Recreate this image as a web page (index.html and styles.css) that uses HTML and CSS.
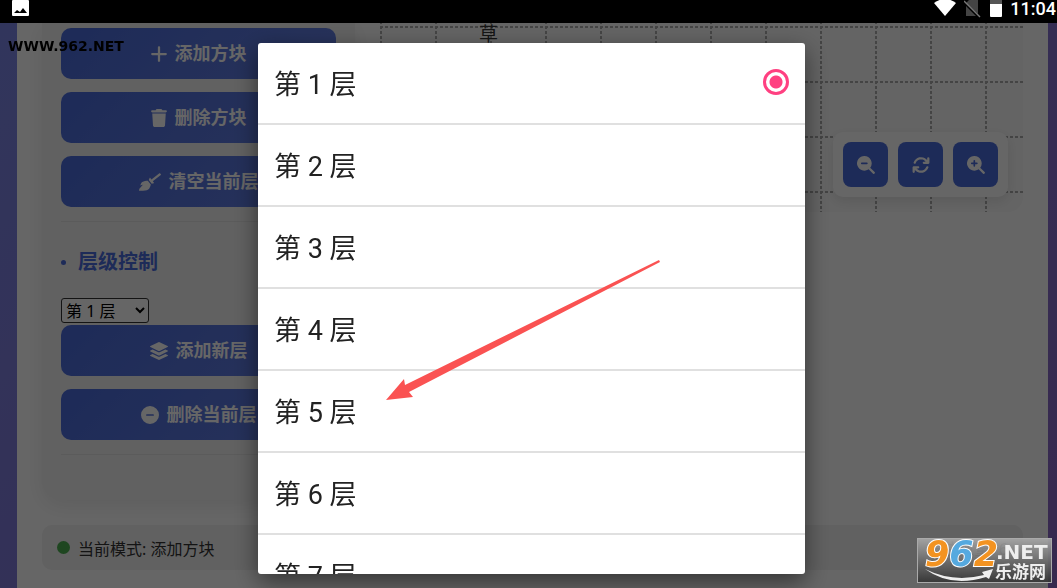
FILE: index.html
```
<!DOCTYPE html>
<html lang="zh-CN">

<head>
    <meta charset="UTF-8">
    <meta name="viewport" content="width=device-width, initial-scale=1.0">
    <title>层级控制</title>
    <link rel="stylesheet" href="styles.css">
</head>

<body>
    <header class="system-bar">
        <svg class="system-icon" viewBox="0 0 18 18">
            <path fill="#fff" fill-rule="evenodd" d="M1 0h15a1 1 0 0 1 1 1v14a1 1 0 0 1-1 1H1a1 1 0 0 1-1-1V1a1 1 0 0 1 1-1zM2 13h13l-4-5-3 4-3-2z" />
        </svg>
        <div class="system-right">
            <svg width="22" height="16" viewBox="0 0 22 16"><path fill="#fff" d="M0 3Q11-5 22 3L11 16z" /></svg>
            <svg width="18" height="18" viewBox="0 0 18 18">
                <path fill="#444" d="M5 0h9v14L2 3zM2 6l10 10H2z" />
                <path stroke="#777" stroke-width="1.4" d="M0 1l16 16" />
            </svg>
            <svg width="12" height="17" viewBox="0 0 12 17"><path fill="#555" d="M0 0h12v5H0z" /><path fill="#fff" d="M0 4h12v12a1 1 0 0 1-1 1H1a1 1 0 0 1-1-1z" /></svg>
            <time class="clock">11:04</time>
        </div>
    </header>

    <main class="page">
        <div class="container">
            <div class="workspace">
                <section class="panel">
                    <div class="group">
                        <button class="btn">
                            <svg class="icon icon-narrow" viewBox="0 0 448 512"><path d="M256 64c0-18-14-32-32-32s-32 14-32 32v160H32c-18 0-32 14-32 32s14 32 32 32h160v160c0 18 14 32 32 32s32-14 32-32V288h160c18 0 32-14 32-32s-14-32-32-32H256z" /></svg>
                            添加方块
                        </button>
                        <button class="btn">
                            <svg class="icon icon-narrow" viewBox="0 0 448 512"><path d="M135 18c6-11 17-18 29-18h120c12 0 23 7 29 18l7 14h96c18 0 32 14 32 32s-14 32-32 32H32C14 96 0 82 0 64s14-32 32-32h96zM32 128h384l-21 339c-2 25-23 45-48 45H101c-25 0-46-20-48-45z" /></svg>
                            删除方块
                        </button>
                        <button class="btn">
                            <svg class="icon icon-wide" viewBox="0 0 640 512"><path d="M256.470 216.770l86.730 109.180s-16.600 102.360-76.570 150.120C206.660 523.850 0 510.190 0 510.190s3.800-23.140 11-55.430l94.620-112.170c3.970-4.700-.870-11.620-6.650-9.500l-60.400 22.090c14.440-41.660 32.720-80.040 54.600-97.470 59.970-47.760 163.300-40.940 163.300-40.940zM636.530 31.030l-19.860-25c-5.490-6.900-15.520-8.050-22.410-2.560l-232.480 177.800-34.140-42.970c-5.090-6.410-15.140-5.210-18.590 2.210l-25.330 54.550 86.730 109.180 58.800-12.450c8-1.690 11.420-11.200 6.340-17.600l-34.090-42.920 232.480-177.800c6.890-5.480 8.040-15.530 2.550-22.440z" /></svg>
                            清空当前层
                        </button>
                    </div>
                    <div class="group">
                        <h2 class="group-title"><span class="bullet"></span><label for="layer">层级控制</label></h2>
                        <select id="layer" class="layer-select">
                            <option>第 1 层</option>
                            <option>第 2 层</option>
                            <option>第 3 层</option>
                            <option>第 4 层</option>
                            <option>第 5 层</option>
                            <option>第 6 层</option>
                            <option>第 7 层</option>
                        </select>
                        <button class="btn">
                            <svg class="icon" viewBox="0 0 512 512"><path d="M12 116l228-112q16-6 32 0l228 112q24 14 0 28L272 256q-16 6-32 0L12 144q-24-14 0-28zM12 242l62-30 150 72q32 14 64 0l150-72 62 30q24 14 0 28L272 382q-16 6-32 0L12 270q-24-14 0-28zM12 368l62-30 150 72q32 14 64 0l150-72 62 30q24 14 0 28L272 508q-16 6-32 0L12 396q-24-14 0-28z" /></svg>
                            添加新层
                        </button>
                        <button class="btn">
                            <svg class="icon" viewBox="0 0 512 512"><path fill-rule="evenodd" d="M256 0a256 256 0 1 0 0 512 256 256 0 1 0 0-512zM168 232h176a24 24 0 0 1 0 48H168a24 24 0 0 1 0-48z" /></svg>
                            删除当前层
                        </button>
                    </div>
                </section>

                <section class="canvas">
                    <svg class="grid">
                        <defs>
                            <pattern id="cell" width="55" height="55" y="3" patternUnits="userSpaceOnUse">
                                <path d="M0 1H55M1 0V55" fill="none" stroke="#aaa" stroke-width="2" stroke-dasharray="3 2" />
                            </pattern>
                        </defs>
                        <rect width="100%" height="100%" fill="url(#cell)" />
                    </svg>
                    <span class="block">草</span>
                    <div class="zoom-tools">
                        <button class="tool" aria-label="缩小">
                            <svg class="icon" viewBox="0 0 512 512"><path fill-rule="evenodd" d="M208 0a208 208 0 1 0 123 376l126 126a32 32 0 0 0 45-45L376 331A208 208 0 0 0 208 0zM136 184h144a24 24 0 0 1 0 48H136a24 24 0 0 1 0-48z" /></svg>
                        </button>
                        <button class="tool" aria-label="重置">
                            <svg class="icon" viewBox="0 0 512 512"><path d="M105 203a160 160 0 0 1 264-60l17 17h-50a32 32 0 0 0 0 64h128a32 32 0 0 0 32-32V64a32 32 0 0 0-64 0v51l-17-17A224 224 0 0 0 45 182a32 32 0 0 0 60 21zM39 289a32 32 0 0 0-23 31v128a32 32 0 0 0 64 0v-51l17 17a224 224 0 0 0 370-84 32 32 0 0 0-60-21 160 160 0 0 1-264 60l-17-17h50a32 32 0 0 0 0-64H48z" /></svg>
                        </button>
                        <button class="tool" aria-label="放大">
                            <svg class="icon" viewBox="0 0 512 512"><path fill-rule="evenodd" d="M208 0a208 208 0 1 0 123 376l126 126a32 32 0 0 0 45-45L376 331A208 208 0 0 0 208 0zM184 184v-48a24 24 0 0 1 48 0v48h48a24 24 0 0 1 0 48h-48v48a24 24 0 0 1-48 0v-48h-48a24 24 0 0 1 0-48z" /></svg>
                        </button>
                    </div>
                </section>
            </div>

            <footer class="status">
                <span class="status-mode"><i class="dot"></i>当前模式: 添加方块</span>
                <span>方块数量: 6</span>
            </footer>
        </div>
    </main>

    <div class="overlay">
        <div class="dialog" role="dialog">
            <label class="option">第 1 层<input type="radio" name="level" checked></label>
            <label class="option">第 2 层<input type="radio" name="level"></label>
            <label class="option">第 3 层<input type="radio" name="level"></label>
            <label class="option">第 4 层<input type="radio" name="level"></label>
            <label class="option">第 5 层<input type="radio" name="level"></label>
            <label class="option">第 6 层<input type="radio" name="level"></label>
            <label class="option">第 7 层<input type="radio" name="level"></label>
        </div>
    </div>

    <svg class="arrow" viewBox="0 0 276 142">
        <path fill="#fa5252" d="M274 0L20 125l-1-6L1 140l27-3-4-5L275 2z" />
    </svg>

    <div class="site-mark">WWW.962.NET</div>

    <svg class="site-logo" viewBox="0 0 135 45">
        <defs>
            <linearGradient id="plate" x2="0" y2="1">
                <stop offset="0" stop-color="#aaa" />
                <stop offset="1" stop-color="#333" />
            </linearGradient>
        </defs>
        <rect x=".5" y=".5" width="134" height="44" fill="url(#plate)" fill-opacity=".9" stroke="#aaa" />
        <path fill="#eee" d="M8 31q28 14 59 6l-2-3 11-3-4 10-3-2Q34 50 8 31z" />
        <text class="logo-digits" x="8" y="28"><tspan fill="#f39321">9</tspan><tspan fill="#55a9df">6</tspan><tspan fill="#f39321">2</tspan></text>
        <text class="logo-net" x="79" y="21">.NET</text>
        <text class="logo-name" x="78" y="40">乐游网</text>
    </svg>
</body>

</html>
```
FILE: styles.css
```
* {
    box-sizing: border-box;
}

body {
    margin: 0;
    height: 100vh;
    display: flex;
    flex-direction: column;
    overflow: hidden;
    font-family: Roboto, "Noto Sans CJK SC", sans-serif;
    font-size: 16px;
    color: #333;
}

button {
    font-family: inherit;
}

.system-bar {
    position: relative;
    z-index: 2;
    height: 23px;
    flex-shrink: 0;
    padding: 0 1px 0 12px;
    display: flex;
    justify-content: space-between;
    background-color: #000;
}

.system-icon {
    width: 18px;
    height: 18px;
}

.system-right {
    display: flex;
    gap: 8px;
}

.clock {
    color: #fff;
    font-size: 18px;
    font-weight: 500;
    line-height: 18px;
}

.page {
    flex: 1;
    padding: 0 9px 0 17px;
    background: linear-gradient(135deg, #7c86e6, #8a66c4);
}

.container {
    height: 100%;
    padding: 0 25px;
    background-color: #fff;
}

.workspace {
    display: flex;
    align-items: flex-start;
    gap: 25px;
    margin-bottom: 25px;
}

.panel {
    width: 313px;
    height: 477px;
    flex-shrink: 0;
    padding: 5px 19px 0;
    background-color: #f2f2f2;
    border-radius: 0 0 19px 19px;
    box-shadow: 0 6px 19px rgba(0, 0, 0, 0.08);
}

.group {
    display: flex;
    flex-direction: column;
    gap: 13px;
    padding-bottom: 14px;
    margin-bottom: 27px;
    border-bottom: 1px solid #e4e4e4;
}

.btn {
    height: 51px;
    border: none;
    border-radius: 10px;
    background: linear-gradient(135deg, #4a6bdc, #6580e2);
    color: #fff;
    font-size: 18px;
    font-weight: 700;
    line-height: 24px;
    display: flex;
    align-items: center;
    justify-content: center;
    gap: 8px;
    cursor: pointer;
}

.icon {
    width: 18px;
    height: 18px;
    fill: currentColor;
}

.icon-narrow {
    width: 16px;
}

.icon-wide {
    width: 22px;
}

.group-title {
    margin: 0 0 9px;
    display: flex;
    align-items: center;
    gap: 12px;
    color: #4a6bdc;
    font-size: 20px;
    line-height: 27px;
}

.bullet {
    width: 5px;
    height: 5px;
    border-radius: 50%;
    background-color: #4a6bdc;
}

.layer-select {
    width: 88px;
    height: 25px;
    margin-bottom: -11px;
    border: 1px solid #333;
    border-radius: 3px;
    background-color: #fff;
    color: #000;
    font-family: "Noto Sans", "Noto Sans CJK SC", sans-serif;
    font-size: 16px;
}

.canvas {
    position: relative;
    flex: 1;
    height: 189px;
    border-radius: 0 0 15px 15px;
    overflow: hidden;
    background-color: #fafafa;
}

.grid {
    display: block;
    width: 100%;
    height: 100%;
}

.block {
    position: absolute;
    left: 99px;
    top: 0;
    font-size: 19px;
    line-height: 24px;
}

.zoom-tools {
    position: absolute;
    right: 15px;
    bottom: 15px;
    display: flex;
    gap: 10px;
    padding: 10px;
    border-radius: 10px;
    background-color: #fff;
    box-shadow: 0 4px 12px rgba(0, 0, 0, 0.1);
}

.tool {
    width: 45px;
    height: 45px;
    padding: 0;
    border: none;
    border-radius: 8px;
    background-color: #4a6bdc;
    color: #fff;
    display: flex;
    align-items: center;
    justify-content: center;
    cursor: pointer;
}

.status {
    display: flex;
    justify-content: space-between;
    align-items: center;
    height: 45px;
    padding: 0 15px;
    border-radius: 10px;
    background-color: #f2f2f2;
    font-family: "Noto Sans", "Noto Sans CJK SC", sans-serif;
}

.status-mode {
    display: flex;
    align-items: center;
    gap: 8px;
}

.dot {
    width: 13px;
    height: 13px;
    border-radius: 50%;
    background-color: #4caf50;
}

.overlay {
    position: fixed;
    inset: 0;
    padding: 43px 252px 14px 258px;
    display: flex;
    background-color: rgba(0, 0, 0, 0.6);
}

.dialog {
    flex: 1;
    overflow: hidden;
    border-radius: 3px;
    background-color: #fff;
    box-shadow: 0 8px 24px rgba(0, 0, 0, 0.5);
}

.option {
    display: flex;
    justify-content: space-between;
    align-items: center;
    height: 82px;
    padding: 0 16px 2px;
    border-bottom: 2px solid #e0e0e0;
    color: #222;
    font-size: 27px;
}

.option input {
    appearance: none;
    width: 26px;
    height: 26px;
    margin: 0;
    border-radius: 50%;
}

.option input:checked {
    border: 3px solid #ff4081;
    background: radial-gradient(circle, #ff4081 6px, #fff 7px);
}

.arrow {
    position: fixed;
    left: 385px;
    top: 260px;
    width: 276px;
}

.site-mark {
    position: fixed;
    z-index: 2;
    left: 8px;
    top: 38px;
    color: #000;
    font: bold 14px/16px "DejaVu Sans", sans-serif;
}

.site-logo {
    position: fixed;
    right: 5px;
    bottom: 5px;
    width: 135px;
}

.logo-digits {
    font: italic bold 35px "DejaVu Sans", sans-serif;
    stroke: #fff;
    stroke-width: 2px;
    paint-order: stroke;
}

.logo-net {
    fill: #eee;
    font: bold 20px "DejaVu Sans", sans-serif;
}

.logo-name {
    fill: #eee;
    font: bold 17px "Noto Sans CJK SC", sans-serif;
}
```
